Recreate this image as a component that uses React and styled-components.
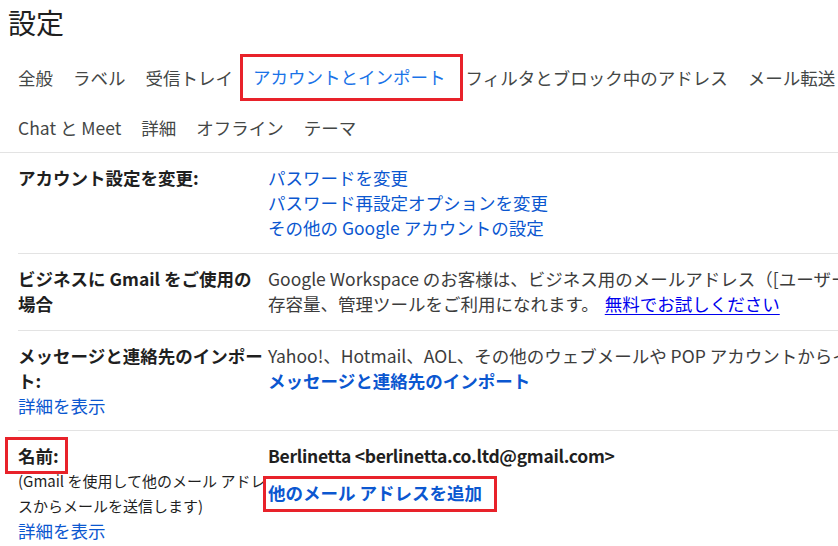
import React from "react";
import styled, { createGlobalStyle } from "styled-components";

const Global = createGlobalStyle`
  html, body { margin: 0; padding: 0; background: #fff; }
  body {
    font-family: "Noto Sans CJK JP", "Noto Sans", sans-serif;
    color: #1f1f1f;
    overflow: hidden;
  }
`;

const Page = styled.div`
  width: 838px;
  height: 546px;
  overflow: hidden;
  background: #fff;
`;

const Title = styled.h1`
  margin: 0;
  padding: 4px 0 0 8px;
  height: 52px;
  box-sizing: border-box;
  font-size: 28px;
  font-weight: 400;
  line-height: 36px;
  color: #1f1f1f;
`;

const Tabs = styled.nav`
  display: flex;
  flex-direction: column;
  padding-left: 18px;
  border-bottom: 1px solid #e3e3e3;
`;

const TabRow = styled.div`
  display: flex;
  gap: 20px;
  height: 50px;
  align-items: center;
  white-space: nowrap;
`;

const Tab = styled.span`
  font-size: 17.5px;
  line-height: 25px;
  color: ${(p) => (p.$active ? "#1a73e8" : "#444746")};
`;

const Mark = styled.span`
  position: relative;
  display: inline-block;
  line-height: 25px;
  &::after {
    content: "";
    position: absolute;
    top: ${(p) => p.$t}px;
    bottom: ${(p) => p.$b}px;
    left: ${(p) => p.$l}px;
    right: ${(p) => p.$r}px;
    border: 3px solid #e8222a;
    pointer-events: none;
  }
`;

const Section = styled.section`
  display: grid;
  grid-template-columns: 250px 1fr;
  margin-left: 18px;
  padding: 12px 0 ${(p) => p.$pb || 13}px;
  border-bottom: 1px solid #e3e3e3;
  &:last-child { border-bottom: none; }
`;

const Label = styled.div`
  display: flex;
  flex-direction: column;
  align-items: flex-start;
  font-size: 17.5px;
  line-height: 25px;
`;

const LabelTitle = styled.span`
  font-weight: 700;
  color: #1f1f1f;
`;

const Note = styled.span`
  font-size: 15px;
  line-height: 25px;
  color: #1f1f1f;
`;

const Content = styled.div`
  display: flex;
  flex-direction: column;
  align-items: flex-start;
  font-size: 17.5px;
  line-height: 25px;
  white-space: nowrap;
  min-width: 0;
`;

const Line = styled.span`
  color: ${(p) => (p.$strong ? "#1f1f1f" : "#3c3c3c")};
  font-weight: ${(p) => (p.$strong ? 700 : 400)};
  letter-spacing: ${(p) => (p.$strong ? "-0.3px" : "normal")};
  margin-top: ${(p) => p.$mt || 0}px;
`;

const Link = styled.a`
  color: #0b57d0;
  text-decoration: none;
  font-weight: ${(p) => (p.$bold ? 700 : 400)};
  letter-spacing: normal;
  cursor: pointer;
`;

const TrialLink = styled.a`
  color: #0000ee;
  text-decoration: underline;
  text-underline-offset: 3px;
  margin-left: 6px;
`;

export default function App() {
  return (
    <Page>
      <Global />
      <Title>設定</Title>
      <Tabs>
        <TabRow>
          <Tab>全般</Tab>
          <Tab>ラベル</Tab>
          <Tab>受信トレイ</Tab>
          <Mark $t={-10} $b={-11} $l={-13} $r={-17}>
            <Tab $active>アカウントとインポート</Tab>
          </Mark>
          <Tab>フィルタとブロック中のアドレス</Tab>
          <Tab>メール転送と POP/IMAP</Tab>
        </TabRow>
        <TabRow>
          <Tab>Chat と Meet</Tab>
          <Tab>詳細</Tab>
          <Tab>オフライン</Tab>
          <Tab>テーマ</Tab>
        </TabRow>
      </Tabs>

      <Section>
        <Label>
          <LabelTitle>アカウント設定を変更:</LabelTitle>
        </Label>
        <Content>
          <Link>パスワードを変更</Link>
          <Link>パスワード再設定オプションを変更</Link>
          <Link>その他の Google アカウントの設定</Link>
        </Content>
      </Section>

      <Section $pb={14}>
        <Label>
          <LabelTitle>ビジネスに Gmail をご使用の場合</LabelTitle>
        </Label>
        <Content>
          <Line>Google Workspace のお客様は、ビジネス用のメールアドレス（[ユーザー名]@[会社名].com）、大容量の保</Line>
          <Line>
            存容量、管理ツールをご利用になれます。
            <TrialLink>無料でお試しください</TrialLink>
          </Line>
        </Content>
      </Section>

      <Section $pb={12}>
        <Label>
          <LabelTitle>メッセージと連絡先のインポート:</LabelTitle>
          <Link>詳細を表示</Link>
        </Label>
        <Content>
          <Line>Yahoo!、Hotmail、AOL、その他のウェブメールや POP アカウントからインポートします。</Line>
          <Link $bold>メッセージと連絡先のインポート</Link>
        </Content>
      </Section>

      <Section>
        <Label>
          <Mark $t={-6} $b={-6} $l={-13} $r={-9}>
            <LabelTitle>名前:</LabelTitle>
          </Mark>
          <Note>(Gmail を使用して他のメール アドレスからメールを送信します)</Note>
          <Link>詳細を表示</Link>
        </Label>
        <Content>
          <Line $strong>Berlinetta &lt;berlinetta.co.ltd@gmail.com&gt;</Line>
          <Line $mt={12}>
            <Mark $t={-4} $b={-7} $l={-5} $r={-15}>
              <Link $bold>他のメール アドレスを追加</Link>
            </Mark>
          </Line>
        </Content>
      </Section>
    </Page>
  );
}
